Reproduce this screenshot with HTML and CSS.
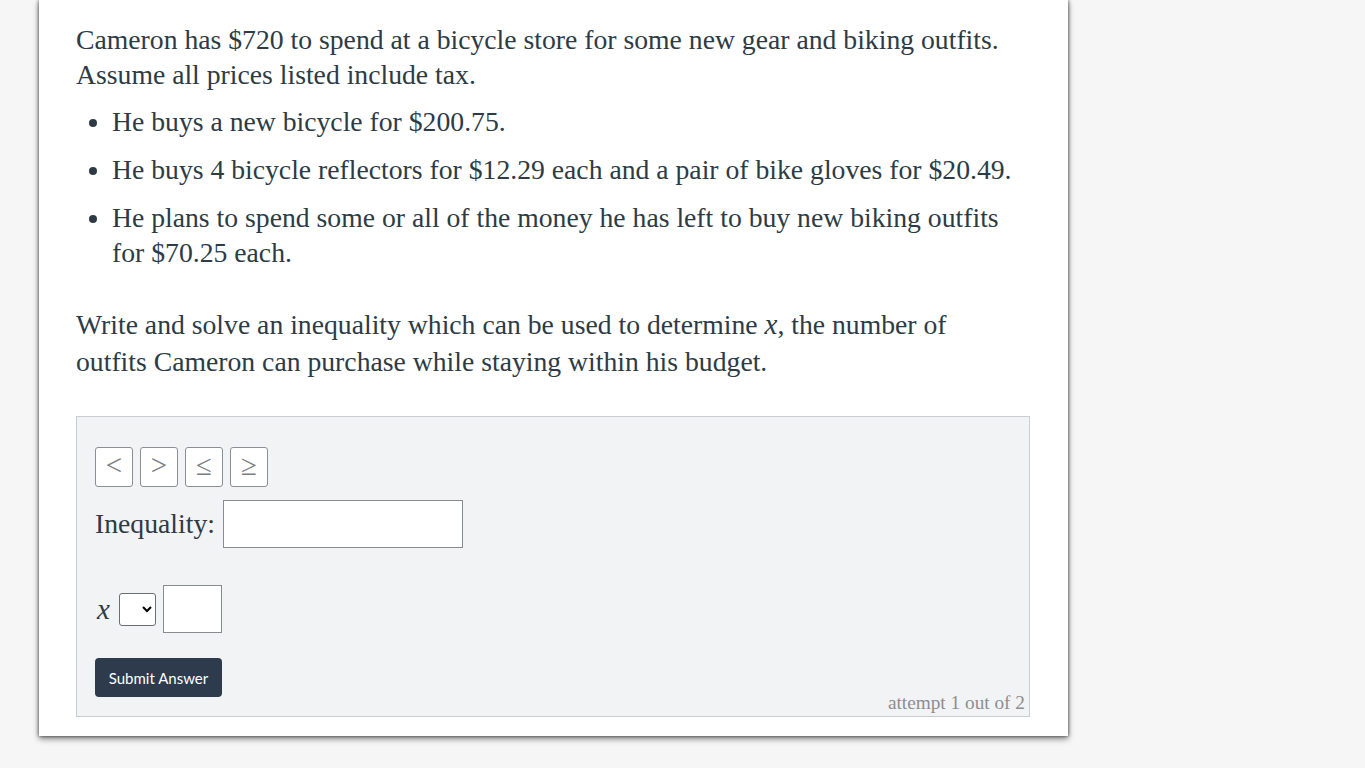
FILE: index.html
```html
<!DOCTYPE html>
<html>
<head>
<meta charset="utf-8">
<link rel="stylesheet" href="styles.css">
</head>
<body>
<main class="card">
  <p class="intro">Cameron has $720 to spend at a bicycle store for some new gear and biking outfits. Assume all prices listed include tax.</p>
  <ul class="items">
    <li>He buys a new bicycle for $200.75.</li>
    <li>He buys 4 bicycle reflectors for $12.29 each and a pair of bike gloves for $20.49.</li>
    <li>He plans to spend some or all of the money he has left to buy new biking outfits for $70.25 each.</li>
  </ul>
  <p class="task">Write and solve an inequality which can be used to determine <span class="mvar">x</span>, the number of outfits Cameron can purchase while staying within his budget.</p>
  <section class="answer">
    <div class="symbols">
      <button class="sym">&lt;</button>
      <button class="sym">&gt;</button>
      <button class="sym">&le;</button>
      <button class="sym">&ge;</button>
    </div>
    <div class="ineq-row">
      <label class="ineq-label">Inequality:</label>
      <input class="ineq-input" type="text">
    </div>
    <div class="sol-row">
      <span class="mvar sol-x">x</span>
      <select class="sol-select"><option></option></select>
      <input class="sol-input" type="text">
    </div>
    <div class="footer">
      <button class="submit">Submit Answer</button>
      <span class="attempt">attempt 1 out of 2</span>
    </div>
  </section>
</main>
</body>
</html>
```
FILE: styles.css
```css
html, body {
  margin: 0;
  padding: 0;
}
body {
  background: #f6f6f6;
  height: 768px;
  overflow: hidden;
  font-family: "Liberation Serif", serif;
  color: #2d3b45;
}
.card {
  margin-left: 39px;
  width: 1029px;
  box-sizing: border-box;
  background: #ffffff;
  padding: 22px 38px 19px 37px;
  box-shadow: 0 3px 6px rgba(0,0,0,0.45), 1px 0 3px rgba(0,0,0,0.35), -1px 0 3px rgba(0,0,0,0.3);
}
.intro {
  margin: 0;
  font-size: 27.7px;
  line-height: 35px;
}
.items {
  margin: 12px 0 0 0;
  padding-left: 36px;
  font-size: 27.7px;
  line-height: 35px;
}
.items li {
  margin-bottom: 13px;
}
.items li:last-child {
  margin-bottom: 0;
}
.task {
  margin: 36px 0 0 0;
  font-size: 27.7px;
  line-height: 37px;
  padding-right: 40px;
}
.mvar {
  font-family: "Liberation Serif", serif;
  font-style: italic;
  font-size: 29px;
}
.answer {
  margin-top: 36px;
  background: #f2f3f5;
  border: 1px solid #c7cdd1;
  padding: 30px 4px 3px 18px;
}
.symbols {
  display: flex;
  gap: 7px;
}
.sym {
  width: 38px;
  height: 40px;
  box-sizing: border-box;
  background: #ffffff;
  border: 1px solid #8a8f94;
  border-radius: 3px;
  color: #7a7d80;
  font-family: "Liberation Serif", serif;
  font-size: 29px;
  line-height: 1;
  padding: 0 0 3px 0;
}
.ineq-row {
  margin-top: 13px;
  display: flex;
  align-items: center;
  gap: 7px;
}
.ineq-label {
  font-size: 27.7px;
}
.ineq-input {
  width: 240px;
  height: 48px;
  box-sizing: border-box;
  border: 1px solid #888c90;
  background: #fff;
  margin: 0 0 0 1px;
}
.sol-row {
  margin-top: 37px;
  display: flex;
  align-items: center;
}
.sol-x {
  width: 24px;
  padding-left: 2px;
  box-sizing: border-box;
  line-height: 1;
}
.sol-select {
  width: 37px;
  height: 33px;
  box-sizing: border-box;
  border: 1px solid #6b6f73;
  border-radius: 3px;
  background: #fff;
  margin: 0 7px 0 0;
}
.sol-input {
  width: 59px;
  height: 48px;
  box-sizing: border-box;
  border: 1px solid #888c90;
  background: #fff;
  margin: 0;
}
.footer {
  margin-top: 25px;
  display: flex;
  justify-content: space-between;
  align-items: flex-end;
}
.submit {
  width: 127px;
  height: 39px;
  margin-bottom: 16px;
  background: #2d3b4d;
  color: #ffffff;
  border: none;
  border-radius: 4px;
  font-family: Lato, sans-serif;
  font-size: 15px;
  padding: 0;
}
.attempt {
  font-size: 19.3px;
  line-height: 20px;
  color: #8b8e91;
}
```
